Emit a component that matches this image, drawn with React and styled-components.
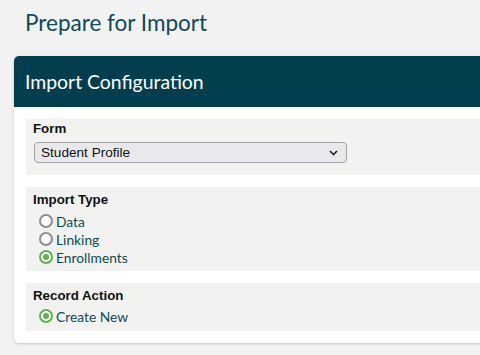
import React, { useState } from 'react';
import styled, { createGlobalStyle } from 'styled-components';

const GlobalStyle = createGlobalStyle`
  html, body {
    margin: 0;
    padding: 0;
    background: #f2f2f2;
    overflow: hidden;
  }
  body {
    font-family: Lato, "Open Sans", sans-serif;
  }
`;

const Page = styled.div`
  width: 480px;
  height: 355px;
  padding: 0 0 0 14px;
  box-sizing: border-box;
  overflow: hidden;
`;

const Title = styled.h1`
  margin: 0;
  padding: 9px 0 0 11px;
  height: 56px;
  box-sizing: border-box;
  font-size: 22.5px;
  font-weight: 400;
  color: #0d4a5b;
  line-height: 28px;
`;

const Card = styled.div`
  width: 500px;
  background: #fff;
  border-radius: 5px;
  box-shadow: 0 1px 3px rgba(0, 0, 0, 0.18);
  overflow: hidden;
`;

const CardHeader = styled.div`
  height: 51px;
  background: #033e4f;
  color: #fff;
  display: flex;
  align-items: center;
  padding-left: 11px;
  font-size: 19.4px;
  font-weight: 400;
`;

const CardBody = styled.div`
  display: flex;
  flex-direction: column;
  gap: 12px;
  padding: 12px 0 12px 12px;
`;

const Section = styled.div`
  background: #f2f2f0;
  padding: ${p => p.$pad || '4px 0 9px 7px'};
  display: flex;
  flex-direction: column;
`;

const Label = styled.div`
  font-family: "Liberation Sans", Arial, sans-serif;
  font-weight: 700;
  font-size: 13.3px;
  color: #111;
  line-height: 16px;
  margin-bottom: ${p => p.$gap || '4px'};
`;

const SelectBox = styled.div`
  width: 313px;
  height: 21px;
  box-sizing: border-box;
  margin-left: 1px;
  border: 1px solid #a4a4a8;
  border-radius: 4px;
  background: #e9e9ed;
  display: flex;
  align-items: center;
  justify-content: space-between;
  padding: 0 8px 0 6px;
  font-family: "Liberation Sans", Arial, sans-serif;
  font-size: 13.6px;
  color: #111;
`;

const RadioList = styled.div`
  display: flex;
  flex-direction: column;
  padding-left: 6px;
`;

const RadioRow = styled.label`
  display: flex;
  align-items: center;
  gap: 3px;
  height: 18px;
  font-size: 13.8px;
  color: #0d4a5b;
  cursor: pointer;
`;

const Dot = styled.span`
  width: 14px;
  height: 14px;
  box-sizing: border-box;
  border-radius: 50%;
  border: 2px solid ${p => (p.$on ? '#5bb44c' : '#8d8d92')};
  background: #fff;
  display: flex;
  align-items: center;
  justify-content: center;
  &::after {
    content: '';
    width: 6px;
    height: 6px;
    border-radius: 50%;
    background: ${p => (p.$on ? '#5bb44c' : 'transparent')};
  }
`;

function Radio({ label, on, onPick }) {
  return (
    <RadioRow onClick={onPick}>
      <Dot $on={on} />
      {label}
    </RadioRow>
  );
}

export default function App() {
  const [type, setType] = useState('Enrollments');
  return (
    <Page>
      <GlobalStyle />
      <Title>Prepare for Import</Title>
      <Card>
        <CardHeader>Import Configuration</CardHeader>
        <CardBody>
          <Section $pad="2px 0 12px 7px">
            <Label $gap="5px">Form</Label>
            <SelectBox>
              Student Profile
              <svg width="9" height="6" viewBox="0 0 9 6">
                <path d="M1 1l3.5 3.5L8 1" fill="none" stroke="#222" strokeWidth="1.6" />
              </svg>
            </SelectBox>
          </Section>
          <Section $pad="5px 0 5px 7px">
            <Label $gap="4px">Import Type</Label>
            <RadioList>
              {['Data', 'Linking', 'Enrollments'].map(t => (
                <Radio key={t} label={t} on={type === t} onPick={() => setType(t)} />
              ))}
            </RadioList>
          </Section>
          <Section $pad="5px 0 6px 7px">
            <Label $gap="3px">Record Action</Label>
            <RadioList>
              <Radio label="Create New" on />
            </RadioList>
          </Section>
        </CardBody>
      </Card>
    </Page>
  );
}
